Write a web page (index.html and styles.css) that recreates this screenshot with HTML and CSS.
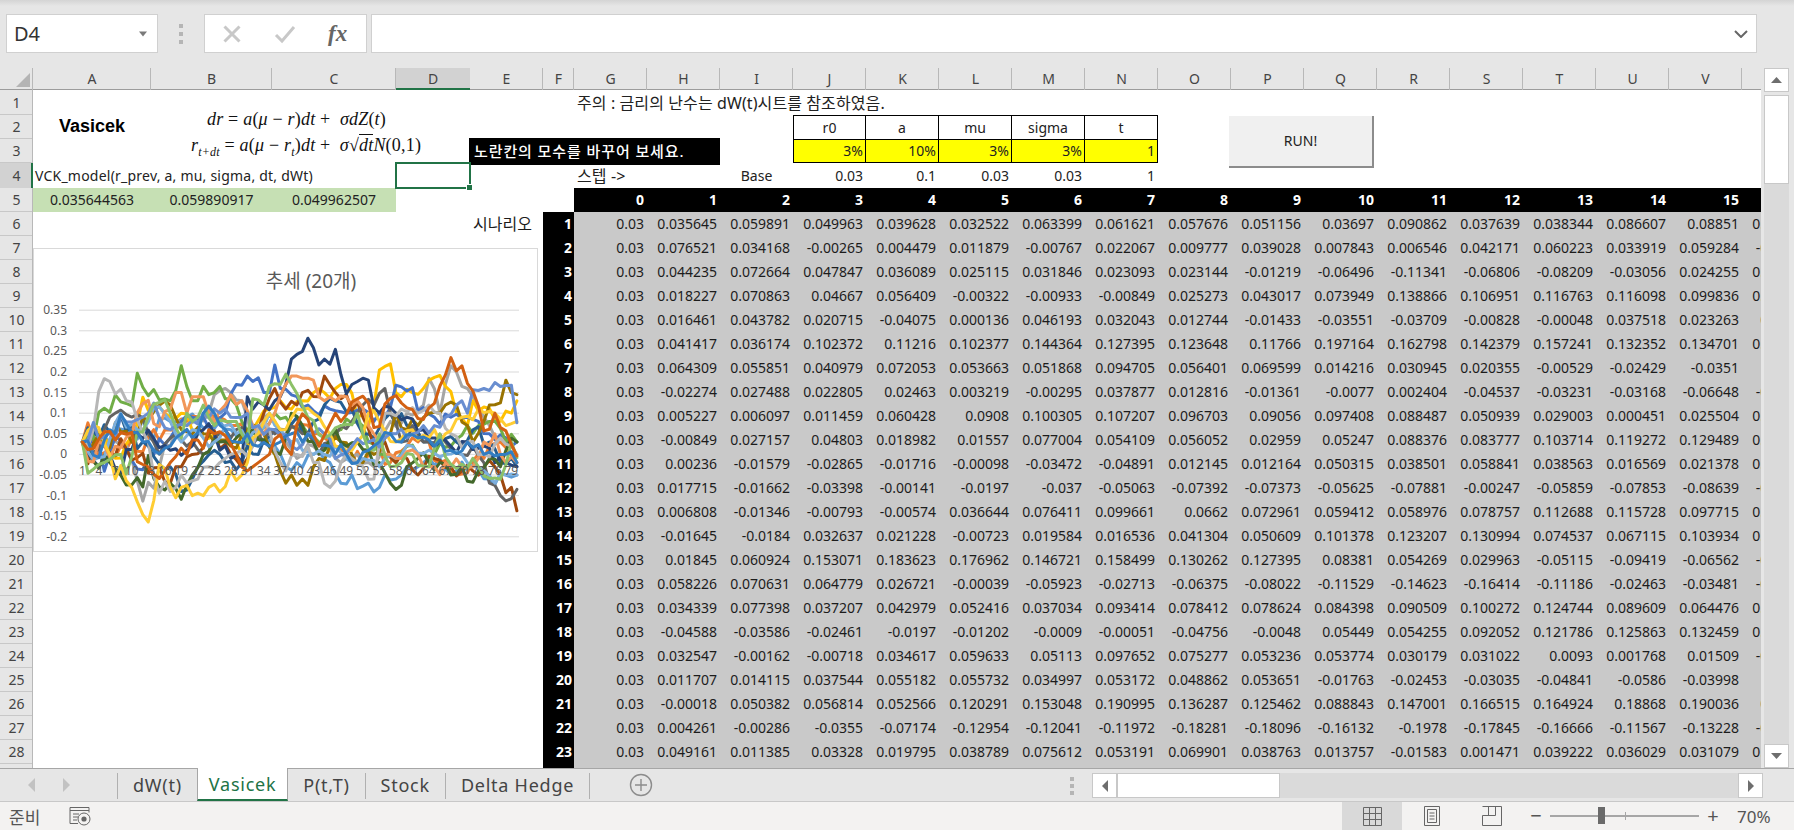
FILE: index.html

```html
<!DOCTYPE html>
<html lang="ko">

<head>
    <meta charset="UTF-8">
    <title>Vasicek</title>
    <link rel="stylesheet" href="styles.css">
</head>

<body>
    <div id="formula_bar">
        <div id="name_box">D4
            <svg class="drop" width="10" height="6" viewBox="0 0 10 6"><path d="M1 0.5h8l-4 5z" /></svg>
        </div>
        <div id="bar_dots"><i></i><i></i><i></i></div>
        <div id="fx_box">
            <svg width="20" height="20" viewBox="0 0 20 20"><path class="off" d="M2.5 2.5l15 15M17.5 2.5l-15 15" /></svg>
            <svg width="24" height="20" viewBox="0 0 24 20"><path class="off" d="M3 11l6 6L21 3" /></svg>
            <span id="fx_text">fx</span>
        </div>
        <div id="formula_input">
            <svg width="14" height="8" viewBox="0 0 14 8"><path class="chev" d="M1 1l6 6 6-6" /></svg>
        </div>
    </div>

    <div id="main">
        <div id="sheet_wrap">
            <table class="sheet">
                <tr class="heads">
                    <th class="corner"></th>
                    <th class="ca">A</th><th class="cb">B</th><th class="cc">C</th><th class="cd sel">D</th><th class="ce">E</th><th class="cf">F</th>
                    <th>G</th><th>H</th><th>I</th><th>J</th><th>K</th><th>L</th><th>M</th><th>N</th><th>O</th><th>P</th><th>Q</th><th>R</th><th>S</th><th>T</th><th>U</th><th>V</th><th>W</th>
                </tr>
                <tr class="tall"><th>1</th><td colspan="6"></td><td colspan="8" class="note">주의 : 금리의 난수는 dW(t)시트를 참조하였음.</td></tr>
                <tr><th>2</th><td colspan="9"></td><td class="pname first">r0</td><td class="pname">a</td><td class="pname">mu</td><td class="pname">sigma</td><td class="pname">t</td></tr>
                <tr><th>3</th><td colspan="9"></td><td class="pval first">3%</td><td class="pval">10%</td><td class="pval">3%</td><td class="pval">3%</td><td class="pval">1</td></tr>
                <tr class="tall">
                    <th class="sel_row">4</th><td colspan="3" class="text">VCK_model(r_prev, a, mu, sigma, dt, dWt)</td>
                    <td class="active"><div id="cell_cursor"><div id="fill_handle"></div></div></td>
                    <td colspan="2"></td><td class="note">스텝 -&gt;</td><td></td><td class="mid">Base</td>
                    <td class="right">0.03</td><td class="right">0.1</td><td class="right">0.03</td><td class="right">0.03</td><td class="right">1</td>
                </tr>
                <tr class="steps">
                    <th>5</th><td class="green">0.035644563</td><td class="green">0.059890917</td><td class="green">0.049962507</td><td></td><td></td><td></td>
                    <td class="b">0</td><td class="b">1</td><td class="b">2</td><td class="b">3</td><td class="b">4</td><td class="b">5</td><td class="b">6</td><td class="b">7</td><td class="b">8</td><td class="b">9</td><td class="b">10</td><td class="b">11</td><td class="b">12</td><td class="b">13</td><td class="b">14</td><td class="b">15</td><td class="b">16</td>
                </tr>
                <tr class="scn"><th>6</th><td colspan="4" class="blank"></td><td class="blank lbl">시나리오</td><td class="x">1</td><td>0.03</td><td>0.035645</td><td>0.059891</td><td>0.049963</td><td>0.039628</td><td>0.032522</td><td>0.063399</td><td>0.061621</td><td>0.057676</td><td>0.051156</td><td>0.03697</td><td>0.090862</td><td>0.037639</td><td>0.038344</td><td>0.086607</td><td>0.08851</td><td>0.079264</td></tr>
                <tr class="scn"><th>7</th><td colspan="5" class="blank"></td><td class="x">2</td><td>0.03</td><td>0.076521</td><td>0.034168</td><td>-0.00265</td><td>0.004479</td><td>0.011879</td><td>-0.00767</td><td>0.022067</td><td>0.009777</td><td>0.039028</td><td>0.007843</td><td>0.006546</td><td>0.042171</td><td>0.060223</td><td>0.033919</td><td>0.059284</td><td>-0.01327</td></tr>
                <tr class="scn"><th>8</th><td colspan="5" class="blank"></td><td class="x">3</td><td>0.03</td><td>0.044235</td><td>0.072664</td><td>0.047847</td><td>0.036089</td><td>0.025115</td><td>0.031846</td><td>0.023093</td><td>0.023144</td><td>-0.01219</td><td>-0.06496</td><td>-0.11341</td><td>-0.06806</td><td>-0.08209</td><td>-0.03056</td><td>0.024255</td><td>0.051408</td></tr>
                <tr class="scn"><th>9</th><td colspan="5" class="blank"></td><td class="x">4</td><td>0.03</td><td>0.018227</td><td>0.070863</td><td>0.04667</td><td>0.056409</td><td>-0.00322</td><td>-0.00933</td><td>-0.00849</td><td>0.025273</td><td>0.043017</td><td>0.073949</td><td>0.138866</td><td>0.106951</td><td>0.116763</td><td>0.116098</td><td>0.099836</td><td>0.087612</td></tr>
                <tr class="scn"><th>10</th><td colspan="5" class="blank"></td><td class="x">5</td><td>0.03</td><td>0.016461</td><td>0.043782</td><td>0.020715</td><td>-0.04075</td><td>0.000136</td><td>0.046193</td><td>0.032043</td><td>0.012744</td><td>-0.01433</td><td>-0.03551</td><td>-0.03709</td><td>-0.00828</td><td>-0.00048</td><td>0.037518</td><td>0.023263</td><td>0.02315</td></tr>
                <tr class="scn"><th>11</th><td colspan="5" class="blank"></td><td class="x">6</td><td>0.03</td><td>0.041417</td><td>0.036174</td><td>0.102372</td><td>0.11216</td><td>0.102377</td><td>0.144364</td><td>0.127395</td><td>0.123648</td><td>0.11766</td><td>0.197164</td><td>0.162798</td><td>0.142379</td><td>0.157241</td><td>0.132352</td><td>0.134701</td><td>0.151238</td></tr>
                <tr class="scn"><th>12</th><td colspan="5" class="blank"></td><td class="x">7</td><td>0.03</td><td>0.064309</td><td>0.055851</td><td>0.040979</td><td>0.072053</td><td>0.053663</td><td>0.051868</td><td>0.094705</td><td>0.056401</td><td>0.069599</td><td>0.014216</td><td>0.030945</td><td>0.020355</td><td>-0.00529</td><td>-0.02429</td><td>-0.0351</td><td>-0.0412</td></tr>
                <tr class="scn"><th>13</th><td colspan="5" class="blank"></td><td class="x">8</td><td>0.03</td><td>-0.02274</td><td>0.027488</td><td>0.022805</td><td>0.02463</td><td>0.003219</td><td>-0.00295</td><td>0.037877</td><td>0.012816</td><td>-0.01361</td><td>-0.0077</td><td>0.002404</td><td>-0.04537</td><td>-0.03231</td><td>-0.03168</td><td>-0.06648</td><td>-0.07215</td></tr>
                <tr class="scn"><th>14</th><td colspan="5" class="blank"></td><td class="x">9</td><td>0.03</td><td>0.005227</td><td>0.006097</td><td>0.011459</td><td>0.060428</td><td>0.0908</td><td>0.100305</td><td>0.107207</td><td>0.096703</td><td>0.09056</td><td>0.097408</td><td>0.088487</td><td>0.050939</td><td>0.029003</td><td>0.000451</td><td>0.025504</td><td>0.040176</td></tr>
                <tr class="scn"><th>15</th><td colspan="5" class="blank"></td><td class="x">10</td><td>0.03</td><td>-0.00849</td><td>0.027157</td><td>0.04803</td><td>0.018982</td><td>0.01557</td><td>0.077004</td><td>0.054109</td><td>0.056052</td><td>0.02959</td><td>0.05247</td><td>0.088376</td><td>0.083777</td><td>0.103714</td><td>0.119272</td><td>0.129489</td><td>0.121745</td></tr>
                <tr class="scn"><th>16</th><td colspan="5" class="blank"></td><td class="x">11</td><td>0.03</td><td>0.00236</td><td>-0.01579</td><td>-0.02865</td><td>-0.01716</td><td>-0.00098</td><td>-0.03472</td><td>-0.04891</td><td>0.012145</td><td>0.012164</td><td>0.050315</td><td>0.038501</td><td>0.058841</td><td>0.038563</td><td>0.016569</td><td>0.021378</td><td>0.013692</td></tr>
                <tr class="scn"><th>17</th><td colspan="5" class="blank"></td><td class="x">12</td><td>0.03</td><td>0.017715</td><td>-0.01662</td><td>-0.03398</td><td>-0.00141</td><td>-0.0197</td><td>-0.037</td><td>-0.05063</td><td>-0.07392</td><td>-0.07373</td><td>-0.05625</td><td>-0.07881</td><td>-0.00247</td><td>-0.05859</td><td>-0.07853</td><td>-0.08639</td><td>-0.09108</td></tr>
                <tr class="scn"><th>18</th><td colspan="5" class="blank"></td><td class="x">13</td><td>0.03</td><td>0.006808</td><td>-0.01346</td><td>-0.00793</td><td>-0.00574</td><td>0.036644</td><td>0.076411</td><td>0.099661</td><td>0.0662</td><td>0.072961</td><td>0.059412</td><td>0.058976</td><td>0.078757</td><td>0.112688</td><td>0.115728</td><td>0.097715</td><td>0.081357</td></tr>
                <tr class="scn"><th>19</th><td colspan="5" class="blank"></td><td class="x">14</td><td>0.03</td><td>-0.01645</td><td>-0.0184</td><td>0.032637</td><td>0.021228</td><td>-0.00723</td><td>0.019584</td><td>0.016536</td><td>0.041304</td><td>0.050609</td><td>0.101378</td><td>0.123207</td><td>0.130994</td><td>0.074537</td><td>0.067115</td><td>0.103934</td><td>0.112064</td></tr>
                <tr class="scn"><th>20</th><td colspan="5" class="blank"></td><td class="x">15</td><td>0.03</td><td>0.01845</td><td>0.060924</td><td>0.153071</td><td>0.183623</td><td>0.176962</td><td>0.146721</td><td>0.158499</td><td>0.130262</td><td>0.127395</td><td>0.08381</td><td>0.054269</td><td>0.029963</td><td>-0.05115</td><td>-0.09419</td><td>-0.06562</td><td>-0.08936</td></tr>
                <tr class="scn"><th>21</th><td colspan="5" class="blank"></td><td class="x">16</td><td>0.03</td><td>0.058226</td><td>0.070631</td><td>0.064779</td><td>0.026721</td><td>-0.00039</td><td>-0.05923</td><td>-0.02713</td><td>-0.06375</td><td>-0.08022</td><td>-0.11529</td><td>-0.14623</td><td>-0.16414</td><td>-0.11186</td><td>-0.02463</td><td>-0.03481</td><td>-0.03042</td></tr>
                <tr class="scn"><th>22</th><td colspan="5" class="blank"></td><td class="x">17</td><td>0.03</td><td>0.034339</td><td>0.077398</td><td>0.037207</td><td>0.042979</td><td>0.052416</td><td>0.037034</td><td>0.093414</td><td>0.078412</td><td>0.078624</td><td>0.084398</td><td>0.090509</td><td>0.100272</td><td>0.124744</td><td>0.089609</td><td>0.064476</td><td>0.059013</td></tr>
                <tr class="scn"><th>23</th><td colspan="5" class="blank"></td><td class="x">18</td><td>0.03</td><td>-0.04588</td><td>-0.03586</td><td>-0.02461</td><td>-0.0197</td><td>-0.01202</td><td>-0.0009</td><td>-0.00051</td><td>-0.04756</td><td>-0.0048</td><td>0.05449</td><td>0.054255</td><td>0.092052</td><td>0.121786</td><td>0.125863</td><td>0.132459</td><td>0.119827</td></tr>
                <tr class="scn"><th>24</th><td colspan="5" class="blank"></td><td class="x">19</td><td>0.03</td><td>0.032547</td><td>-0.00162</td><td>-0.00718</td><td>0.034617</td><td>0.059633</td><td>0.05113</td><td>0.097652</td><td>0.075277</td><td>0.053236</td><td>0.053774</td><td>0.030179</td><td>0.031022</td><td>0.0093</td><td>0.001768</td><td>0.01509</td><td>-0.01148</td></tr>
                <tr class="scn"><th>25</th><td colspan="5" class="blank"></td><td class="x">20</td><td>0.03</td><td>0.011707</td><td>0.014115</td><td>0.037544</td><td>0.055182</td><td>0.055732</td><td>0.034997</td><td>0.053172</td><td>0.048862</td><td>0.053651</td><td>-0.01763</td><td>-0.02453</td><td>-0.03035</td><td>-0.04841</td><td>-0.0586</td><td>-0.03998</td><td>-0.0387</td></tr>
                <tr class="scn"><th>26</th><td colspan="5" class="blank"></td><td class="x">21</td><td>0.03</td><td>-0.00018</td><td>0.050382</td><td>0.056814</td><td>0.052566</td><td>0.120291</td><td>0.153048</td><td>0.190995</td><td>0.136287</td><td>0.125462</td><td>0.088843</td><td>0.147001</td><td>0.166515</td><td>0.164924</td><td>0.18868</td><td>0.190036</td><td>0.17215</td></tr>
                <tr class="scn"><th>27</th><td colspan="5" class="blank"></td><td class="x">22</td><td>0.03</td><td>0.004261</td><td>-0.00286</td><td>-0.0355</td><td>-0.07174</td><td>-0.12954</td><td>-0.12041</td><td>-0.11972</td><td>-0.18281</td><td>-0.18096</td><td>-0.16132</td><td>-0.1978</td><td>-0.17845</td><td>-0.16666</td><td>-0.11567</td><td>-0.13228</td><td>-0.14473</td></tr>
                <tr class="scn"><th>28</th><td colspan="5" class="blank"></td><td class="x">23</td><td>0.03</td><td>0.049161</td><td>0.011385</td><td>0.03328</td><td>0.019795</td><td>0.038789</td><td>0.075612</td><td>0.053191</td><td>0.069901</td><td>0.038763</td><td>0.013757</td><td>-0.01583</td><td>0.001471</td><td>0.039222</td><td>0.036029</td><td>0.031079</td><td>0.027906</td></tr>
                <tr class="scn"><th></th><td colspan="5" class="blank"></td><td class="x"></td><td colspan="17"></td></tr>
            </table>

            <div class="label_title">Vasicek</div>
            <div class="eq eq1"><i>dr</i> = <i>a</i>(<i>μ</i> − <i>r</i>)<i>dt</i> +&nbsp; <i>σdZ</i>(<i>t</i>)</div>
            <div class="eq eq2"><i>r</i><sub><i>t+dt</i></sub> = <i>a</i>(<i>μ</i> − <i>r</i><sub><i>t</i></sub>)<i>dt</i> +&nbsp; <i>σ</i>√<span class="over"><i>dt</i></span><i>N</i>(0,1)</div>
            <div id="notice">노란칸의 모수를 바꾸어 보세요.</div>
            <div id="run_btn">RUN!</div>
            <div id="chart"><svg id="chart_svg" width="503" height="302" viewBox="0 0 503 302"></svg></div>
        </div>

        <div id="vbar">
            <div class="vbtn"><svg width="11" height="6" viewBox="0 0 11 6"><path class="tri" d="M5.5 0l5.5 6H0z" /></svg></div>
            <div id="vthumb"></div>
            <div id="vtrack"></div>
            <div class="vbtn"><svg width="11" height="6" viewBox="0 0 11 6"><path class="tri" d="M0 0h11L5.5 6z" /></svg></div>
        </div>
    </div>

    <div id="tab_bar">
        <div id="tab_nav">
            <svg width="7" height="14" viewBox="0 0 7 14"><path class="nav" d="M7 0v14L0 7z" /></svg>
            <svg width="7" height="14" viewBox="0 0 7 14"><path class="nav" d="M0 0v14l7-7z" /></svg>
        </div>
        <div class="tab">dW(t)</div>
        <div class="tab on">Vasicek</div>
        <div class="tab">P(t,T)</div>
        <div class="tab">Stock</div>
        <div class="tab last">Delta Hedge</div>
        <svg id="add_sheet" width="24" height="24" viewBox="0 0 24 24"><circle cx="12" cy="12" r="10.5" /><path d="M12 6v12M6 12h12" /></svg>
        <div id="tab_dots"><i></i><i></i><i></i></div>
        <div id="hscroll">
            <div class="hbtn"><svg width="6" height="12" viewBox="0 0 6 12"><path class="tri" d="M6 0v12L0 6z" /></svg></div>
            <div id="hthumb"></div>
            <div id="htrack"></div>
            <div class="hbtn"><svg width="6" height="12" viewBox="0 0 6 12"><path class="tri" d="M0 0v12l6-6z" /></svg></div>
        </div>
    </div>

    <div id="status_bar">
        <span id="ready">준비</span>
        <svg id="macro_icon" width="22" height="19" viewBox="0 0 22 19">
            <path class="ico" d="M1 .5h19v5M1 .5v16h8M1 3.5h19M4 7h6M4 10h5M4 13h4" />
            <circle class="ico" cx="15" cy="12" r="6" /><circle class="dot" cx="15" cy="12" r="2.6" />
        </svg>
        <div id="views">
            <div class="view on">
                <svg width="19" height="19" viewBox="0 0 19 19"><path class="ico" d="M.5.5h18v18H.5zM6.5.5v18M12.5.5v18M.5 6.5h18M.5 12.5h18" /></svg>
            </div>
            <div class="view">
                <svg width="22" height="20" viewBox="0 0 22 20"><path class="ico" d="M3.5.5h15v19h-15zM6.5 3.5h9v13h-9zM8.5 7h5M8.5 10h5M8.5 13h5" /></svg>
            </div>
            <div class="view">
                <svg width="20" height="20" viewBox="0 0 20 20"><path class="ico" d="M.5.5h19v19H.5V9.5h13V.5M6.5.5v9" /></svg>
            </div>
        </div>
        <span class="zoom_sign">−</span>
        <div id="zoom_slider"><i id="zoom_tick"></i><i id="zoom_thumb"></i></div>
        <span class="zoom_sign">+</span>
        <span id="zoom_text">70%</span>
    </div>

    <script src="chart.js"></script>
</body>

</html>
```

FILE: styles.css

```css
* {
    box-sizing: border-box;
}

body {
    margin: 0;
    width: 1794px;
    height: 830px;
    overflow: hidden;
    background: #e6e6e6;
    font-family: "Noto Sans", "Noto Sans CJK KR", sans-serif;
    font-size: 14px;
    color: #222;
}

/* formula bar */
#formula_bar {
    height: 68px;
    padding: 14px 0 0 6px;
    display: flex;
    align-items: flex-start;
    background: linear-gradient(#d4d4d4 0, #e6e6e6 6px);
}

#name_box {
    width: 152px;
    height: 39px;
    background: #fff;
    border: 1px solid #d0d0d0;
    padding-left: 7px;
    display: flex;
    align-items: center;
    justify-content: space-between;
    font-size: 20px;
    color: #333;
}

#name_box .drop {
    margin-right: 9px;
    fill: #7a7a7a;
}

#bar_dots {
    width: 46px;
    height: 39px;
    display: flex;
    flex-direction: column;
    align-items: center;
    justify-content: center;
    gap: 4px;
}

#bar_dots i,
#tab_dots i {
    width: 4px;
    height: 4px;
    background: #b5b5b5;
}

#fx_box {
    width: 163px;
    height: 39px;
    background: #fff;
    border: 1px solid #d0d0d0;
    padding-left: 17px;
    display: flex;
    align-items: center;
    gap: 31px;
}

#fx_box .off {
    fill: none;
    stroke: #c8c8c8;
    stroke-width: 3;
}

#fx_text {
    font-family: "Liberation Serif", serif;
    font-style: italic;
    font-weight: bold;
    font-size: 23px;
    color: #666;
}

#formula_input {
    width: 1386px;
    height: 39px;
    margin-left: 4px;
    background: #fff;
    border: 1px solid #d0d0d0;
    padding-right: 8px;
    display: flex;
    align-items: center;
    justify-content: flex-end;
}

#formula_input .chev {
    fill: none;
    stroke: #666;
    stroke-width: 2;
}

/* sheet */
#main {
    height: 700px;
    display: flex;
}

#sheet_wrap {
    width: 1761px;
    height: 700px;
    position: relative;
    overflow: hidden;
    background: #fff;
}

.sheet {
    width: 1815px;
    table-layout: fixed;
    border-collapse: separate;
    border-spacing: 0;
}

.sheet tr {
    height: 24px;
}

.sheet tr.tall {
    height: 25px;
}

.sheet tr.heads {
    height: 22px;
}

.sheet th,
.sheet td {
    padding: 0;
    line-height: 20px;
    white-space: nowrap;
    font-weight: normal;
}

.sheet th {
    width: 73px;
    background: #e6e6e6;
    color: #444;
    text-align: center;
    box-shadow: inset -1px 0 0 #b8b8b8, inset 0 -1px 0 #c8c8c8;
}

.sheet .heads th {
    box-shadow: inset -1px 0 0 #b8b8b8, inset 0 -1px 0 #9c9c9c;
}

.sheet th.corner {
    width: 33px;
    position: relative;
}

.sheet th.corner::after {
    content: "";
    position: absolute;
    right: 3px;
    bottom: 3px;
    border-style: solid;
    border-width: 0 0 14px 14px;
    border-color: transparent transparent #b4b4b4 transparent;
}

.sheet th.ca {
    width: 118px;
}

.sheet th.cb {
    width: 121px;
}

.sheet th.cc {
    width: 124px;
}

.sheet th.cd {
    width: 74px;
}

.sheet th.cf {
    width: 31px;
}

.sheet .heads th.sel {
    background: #d2d2d2;
    box-shadow: inset 0 -2px 0 #217346;
}

.sheet th.sel_row {
    background: #d2d2d2;
    box-shadow: inset -2px 0 0 #217346;
}

.note {
    padding-left: 3px !important;
    font-size: 16px;
    letter-spacing: .1px;
}

.text {
    padding-left: 2px !important;
    letter-spacing: .22px;
}

.mid {
    text-align: center;
}

.right {
    text-align: right;
    padding-right: 3px !important;
}

.pname,
.pval {
    border-top: 1px solid #000;
    border-right: 1px solid #000;
}

.pname {
    text-align: center;
}

.pval {
    background: #ff0;
    text-align: right;
    padding-right: 2px !important;
    border-bottom: 1px solid #000;
}

.first {
    border-left: 1px solid #000;
}

.green {
    background: #c6e0b4;
    text-align: center;
}

.active {
    position: relative;
}

#cell_cursor {
    position: absolute;
    left: -1px;
    right: -1px;
    top: -1px;
    bottom: -1px;
    border: 2px solid #217346;
    z-index: 3;
}

#fill_handle {
    position: absolute;
    right: -4px;
    bottom: -4px;
    width: 7px;
    height: 7px;
    background: #217346;
    border: 1px solid #fff;
}

.steps .b {
    background: #000;
    color: #fff;
    font-weight: bold;
    text-align: right;
    padding-right: 3px;
}

.scn td {
    background: #c9c9c9;
    text-align: right;
    padding-right: 3px;
    color: #1c1c1c;
}

.scn td.blank {
    background: none;
}

.scn td.lbl {
    padding-right: 11px;
    font-size: 16px;
}

.scn td.x {
    background: #000;
    color: #fff;
    font-weight: bold;
    padding-right: 2px;
}

/* things on top of the cells */
.label_title {
    position: absolute;
    left: 59px;
    top: 48px;
    font-family: "Liberation Sans", sans-serif;
    font-weight: bold;
    font-size: 18px;
    color: #000;
}

.eq {
    position: absolute;
    font-family: "Liberation Serif", serif;
    font-size: 18px;
    letter-spacing: .2px;
    line-height: 24px;
    white-space: nowrap;
    color: #111;
}

.eq1 {
    left: 207px;
    top: 39px;
}

.eq2 {
    left: 191px;
    top: 65px;
}

.eq sub {
    font-size: 12px;
    line-height: 0;
}

.over {
    border-top: 1px solid #111;
}

#notice {
    position: absolute;
    left: 469px;
    top: 70px;
    width: 251px;
    height: 27px;
    padding-left: 5px;
    background: #000;
    color: #fff;
    font-size: 15px;
    font-weight: 500;
    letter-spacing: .9px;
    line-height: 27px;
    white-space: nowrap;
}

#run_btn {
    position: absolute;
    left: 1229px;
    top: 48px;
    width: 145px;
    height: 52px;
    background: #f0f0f0;
    border-right: 2px solid #8c8c8c;
    border-bottom: 2px solid #8c8c8c;
    text-align: center;
    line-height: 50px;
    color: #222;
}

#chart {
    position: absolute;
    left: 33px;
    top: 180px;
    width: 505px;
    height: 304px;
    background: #fff;
    border: 1px solid #d9d9d9;
}

#chart_svg {
    display: block;
}

.grid_line {
    stroke: #d9d9d9;
    stroke-width: 1;
}

.axis_text {
    font-size: 12px;
    fill: #595959;
}

.chart_title {
    font-size: 19px;
    fill: #595959;
}

.series {
    fill: none;
    stroke-width: 3;
    stroke-linejoin: round;
    stroke-linecap: round;
}

/* vertical scroll bar */
#vbar {
    width: 25px;
    height: 700px;
    margin-left: 3px;
    display: flex;
    flex-direction: column;
}

.vbtn {
    height: 24px;
    background: #fff;
    border: 1px solid #c8c8c8;
    display: flex;
    align-items: center;
    justify-content: center;
}

.tri {
    fill: #6e6e6e;
}

#vthumb {
    height: 89px;
    margin-top: 3px;
    background: #fff;
    border: 1px solid #c8c8c8;
}

#vtrack {
    flex: 1;
    background: #dadada;
}

/* sheet tabs */
#tab_bar {
    height: 34px;
    border-top: 1px solid #a6a6a6;
    border-bottom: 1px solid #c8c8c8;
    display: flex;
    align-items: flex-start;
    font-size: 18px;
    letter-spacing: .75px;
    color: #444;
}

#tab_nav {
    width: 117px;
    height: 32px;
    padding-left: 28px;
    display: flex;
    align-items: center;
    gap: 28px;
}

#tab_nav .nav {
    fill: #c2c2c2;
}

.tab {
    height: 26px;
    margin-top: 4px;
    padding: 0 15px;
    border-left: 1px solid #b0b0b0;
    line-height: 24px;
    white-space: nowrap;
}

.tab.on {
    height: 33px;
    margin-top: -1px;
    padding: 4px 11px 0;
    background: #fff;
    color: #217346;
    border-left: 1px solid #a6a6a6;
    border-right: 1px solid #a6a6a6;
    border-bottom: 2px solid #217346;
}

.tab.on + .tab {
    border-left: 0;
}

.tab.last {
    border-right: 1px solid #b0b0b0;
}

#add_sheet {
    margin: 4px 0 0 39px;
    fill: none;
    stroke: #8c8c8c;
    stroke-width: 1.4;
}

#tab_dots {
    margin: 5px 0 0 auto;
    width: 24px;
    height: 24px;
    display: flex;
    flex-direction: column;
    align-items: center;
    justify-content: center;
    gap: 3px;
}

#hscroll {
    width: 671px;
    height: 25px;
    margin: 4px 31px 0 8px;
    display: flex;
}

.hbtn {
    width: 25px;
    background: #fff;
    border: 1px solid #c8c8c8;
    display: flex;
    align-items: center;
    justify-content: center;
}

#hthumb {
    width: 163px;
    background: #fff;
    border: 1px solid #c8c8c8;
}

#htrack {
    flex: 1;
    background: #dadada;
}

/* status bar */
#status_bar {
    height: 28px;
    background: #f3f2f1;
    display: flex;
    align-items: center;
    font-size: 17px;
    color: #555;
}

#ready {
    margin-left: 9px;
    font-size: 17px;
}

#macro_icon {
    margin-left: 29px;
}

.ico {
    fill: none;
    stroke: #666;
    stroke-width: 1;
}

.dot {
    fill: #666;
}

#views {
    margin-left: auto;
    display: flex;
}

.view {
    width: 60px;
    height: 28px;
    display: flex;
    align-items: center;
    justify-content: center;
}

.view.on {
    background: #d9d9d9;
}

.zoom_sign {
    width: 14px;
    margin-left: 7px;
    text-align: center;
    font-size: 20px;
    line-height: 26px;
}

#zoom_slider {
    width: 149px;
    height: 2px;
    margin-left: 7px;
    background: #a6a6a6;
    position: relative;
}

#zoom_tick {
    position: absolute;
    left: 75px;
    top: -3px;
    width: 1px;
    height: 8px;
    background: #a6a6a6;
}

#zoom_thumb {
    position: absolute;
    left: 48px;
    top: -8px;
    width: 7px;
    height: 17px;
    background: #6a6a6a;
}

#zoom_text {
    width: 34px;
    margin: 0 23px 0 17px;
    white-space: nowrap;
}
```

FILE: chart.js

```js
window.onload = function () {
    var oSvg = document.getElementById('chart_svg');
    var aRow = document.querySelectorAll('.sheet tr.scn');
    var NS = 'http://www.w3.org/2000/svg';
    var iSeed = 48271;

    var aColor = ['#5B9BD5', '#ED7D31', '#A5A5A5', '#FFC000', '#4472C4', '#70AD47', '#255E91', '#9E480E', '#636363', '#997300',
        '#264478', '#43682B', '#7CAFDD', '#F1975A', '#B7B7B7', '#FFCD33', '#698ED0', '#8CC168', '#327DC2', '#D26012'];

    // steps after the ones in the table, read off as step:value
    var aLater = [
        '17:.08 20:.09 24:.07 28:.06 32:.03 36:.02 38:-.03 40:-.02 43:0 46:-.02 48:-.07 50:-.05 51:-.083 53:-.07 55:-.08 56:-.05 58:-.06 60:-.03 63:-.02 66:-.01 69:-.04 72:-.02 75:-.06 78:-.05 80:-.05',
        '17:.06 20:.08 24:.1 28:.07 32:.04 36:.06 40:.07 44:.05 46:.03 48:.01 50:-.02 54:.02 57:-.02 60:.02 64:.03 66:-.02 69:-.05 72:-.015 75:.02 77:.03 80:-.02',
        '17:.02 18:.06 20:.07 22:.09 24:.1 25:.145 26:.155 28:.15 30:.13 31:.09 32:.03 34:.09 36:.08 38:.03 40:-.01 43:.02 46:.01 48:-.02 51:0 54:-.03 57:.08 60:.1 63:.12 64:.185 66:.1 67:.17 68:.215 69:.2 70:.165 71:.16 72:.14 74:.09 77:.04 80:.03',
        '17:.09 19:.1 22:.06 25:.05 28:.03 30:0 32:.06 35:.11 37:.13 39:.11 41:.13 43:.15 45:.15 47:.16 48:.17 49:.17 51:.09 53:.07 54:.12 55:.205 57:.22 58:.15 59:.14 61:.15 63:.16 65:.187 67:.165 69:.1 71:.07 72:.13 74:.115 76:.085 78:.105 79:.1 80:.13',
        '17:.04 19:.08 21:.09 23:.09 25:.07 27:.1 29:.17 30:.168 31:.19 33:.186 34:.15 35:.15 36:.217 37:.16 38:.158 40:.14 42:.12 46:.11 49:.1 52:.11 54:.08 56:.09 58:.168 60:.154 61:.162 62:.105 65:.09 68:.09 71:.09 73:.08 75:.05 78:.04 80:.03',
        '17:.13 18:.155 19:.215 20:.165 21:.13 22:.13 23:.165 24:.145 25:.15 26:.165 27:.135 28:.135 29:.12 30:.08 32:.05 34:.065 36:.1 38:.09 40:.06 42:.05 44:.03 46:.02 48:.06 51:.08 53:.03 56:0 58:-.02 60:.02 62:0 65:0 68:.02 71:.07 73:.07 75:.08 78:.03 80:.03',
        '17:-.03 19:-.09 21:-.06 22:-.03 25:.01 27:-.02 30:-.02 31:.02 33:0 36:.06 38:.04 40:.09 42:.05 45:.12 47:.13 50:.11 52:.05 54:.04 57:.1 60:.07 63:.03 66:.03 69:.03 72:.06 75:.03 77:-.02 80:-.03',
        '17:-.07 19:-.03 21:0 24:.05 28:0 30:-.03 32:.03 34:.1 36:.16 38:.11 40:.12 41:.15 44:.14 45:.19 47:.15 49:.145 52:.09 54:.02 56:.03 58:-.02 60:-.01 62:-.05 65:-.01 68:-.03 70:-.04 72:-.04 74:-.03 76:-.03 77:-.05 78:-.093 79:-.08 80:-.137',
        '17:.04 20:.02 23:0 26:.05 29:.06 32:.02 35:.06 38:.06 41:.05 44:0 46:.03 48:.07 50:.08 52:.12 54:.12 56:.16 57:.1 59:.03 61:.07 64:.03 67:.03 70:0 72:.02 74:-.02 75:-.07 76:-.075 77:-.1 78:-.113 80:-.085',
        '17:.12 19:.06 21:.05 23:.05 25:.03 28:.02 31:.06 34:.05 36:0 37:-.04 38:-.07 39:-.05 40:-.075 41:-.06 42:-.075 43:-.03 44:-.01 46:.02 48:.03 50:0 52:-.02 54:0 56:.04 58:.1 60:.06 62:.07 64:.1 66:.1 67:.12 69:.12 71:.07 72:.03 74:.08 75:.12 77:.125 78:.18 79:.15 80:.145',
        '17:.01 20:.01 23:.06 25:.05 28:-.01 30:-.02 31:.14 32:.11 34:.12 36:.13 37:.14 38:.17 39:.231 40:.243 41:.25 42:.282 43:.259 44:.217 45:.231 46:.219 47:.255 48:.194 49:.147 51:.177 52:.185 53:.18 54:.113 55:.101 56:.117 58:.1 60:.09 63:.06 66:.04 68:.02 71:.03 74:.02 76:-.02 78:-.02 80:-.03',
        '17:-.07 19:-.109 20:-.075 21:-.05 23:0 26:.03 29:.04 32:.06 35:.02 37:0 38:.04 39:.1 41:.07 43:.03 45:.01 47:.06 49:.02 51:.03 53:.01 55:-.02 57:-.07 59:-.075 60:-.03 62:-.01 64:-.02 66:-.02 68:-.05 70:-.03 71:-.065 73:-.04 75:-.01 77:-.03 78:.01 80:.03',
        '17:.08 19:.03 21:.06 23:.04 25:.03 27:.07 29:.05 31:.03 33:.06 35:.1 37:.06 39:.03 41:.01 43:0 45:0 47:.02 49:-.01 52:-.01 55:-.03 58:-.01 61:.02 64:.01 67:0 70:0 72:-.03 74:-.04 76:-.07 78:-.05 80:-.05',
        '17:.11 18:.15 19:.15 20:.1 21:.14 22:.14 23:.14 24:.1 25:.08 27:.12 28:.145 30:.13 32:.07 34:.05 36:.1 38:.17 39:.19 40:.19 41:.185 42:.185 43:.18 44:.14 45:.13 47:.13 49:.14 51:.13 53:.07 55:.03 57:0 59:-.01 62:0 65:-.03 68:-.03 70:-.03 72:-.03 74:.03 76:.05 78:-.02 80:-.02',
        '17:-.09 18:-.08 19:-.05 20:-.07 22:-.06 24:-.03 26:-.02 28:0 30:.01 32:.02 34:.08 35:.06 37:-.02 38:-.04 40:0 42:.02 44:-.02 45:-.07 46:-.08 48:-.02 50:-.01 52:-.03 54:-.06 56:.1 57:.1 59:.11 62:.1 64:.12 66:.1 68:.05 71:.03 74:0 77:.04 80:0',
        '17:-.08 18:-.105 19:-.08 20:-.075 21:-.1 23:-.1 24:-.08 27:-.078 28:-.04 29:-.063 30:-.05 31:-.02 32:.04 33:.05 35:.1 37:.06 40:.11 43:.1 46:.05 47:.02 49:.01 51:.03 53:.1 55:.08 58:.03 61:.06 64:.04 67:.05 70:.09 73:.11 76:.1 78:.07 80:.08',
        '17:.06 20:.07 23:.1 26:.1 28:.09 30:.09 33:.07 36:.06 39:.02 42:.05 45:.05 47:-.01 50:.02 53:.03 56:.04 58:.05 60:.04 63:.07 65:.07 67:.09 69:.12 70:.13 71:.1 72:.157 73:.155 74:.16 75:.155 77:.165 78:.167 79:.168 80:.077',
        '17:.1 19:.04 20:.1 21:.08 23:.12 25:.07 27:.08 28:.08 30:.05 31:.03 32:.135 34:.12 35:.165 37:.17 38:.195 39:.17 42:.09 45:.04 48:.07 51:.1 52:.05 54:.01 55:.05 57:-.03 59:-.02 61:0 64:-.03 66:.05 68:-.024 70:-.024 73:-.03 76:-.057 78:-.025 79:.03 80:-.008',
        '17:.02 19:.05 21:.04 23:.1 25:.1 27:.06 29:.03 31:.05 33:.02 35:.02 37:.03 39:.05 41:.03 43:.04 46:.02 49:0 51:-.02 53:.01 55:.03 57:.05 59:.03 62:.04 65:.02 68:.01 71:.03 74:0 77:0 80:-.02',
        '17:-.02 18:-.005 19:.015 20:0 21:.035 22:.035 23:.015 24:.06 25:.05 26:.055 27:.045 28:.025 29:0 30:-.03 31:-.04 32:-.03 33:-.02 34:-.01 35:0 37:.048 39:0 40:.073 42:.085 43:.048 44:.02 46:.073 47:.1 48:.08 51:.135 53:.125 54:.065 55:.068 56:.122 58:.143 61:.109 63:.085 64:.113 66:.166 68:.235 69:.203 70:.215 72:.154 74:.057 75:.061 76:.1 78:.057 79:.024 80:-.004'
    ];

    function getX(iStep) {
        return 48.35 + 5.5 * (iStep - 1);
    }

    function getY(fVal) {
        return 205.4 - 412 * fVal;
    }

    function rnd() {
        iSeed = iSeed * 16807 % 2147483647;
        return iSeed / 2147483647;
    }

    function add(sTag, oAttr, sText) {
        var oEl = document.createElementNS(NS, sTag);
        for (var k in oAttr) {
            oEl.setAttribute(k, oAttr[k]);
        }
        if (sText) {
            oEl.textContent = sText;
        }
        oSvg.appendChild(oEl);
    }

    function getSeries(n) {
        var aVal = [];
        var aCell = aRow[n].querySelectorAll('td:not(.blank):not(.x)');
        for (var i = 0; i < 16; i++) {
            aVal.push(parseFloat(aCell[i].textContent));
        }
        var aMark = aLater[n].split(' ').map(function (s) {
            var a = s.split(':');
            return { s: parseInt(a[0]), v: parseFloat(a[1]) };
        });
        var iLast = 16;
        var fLast = aVal[15];
        for (var m = 0; m < aMark.length; m++) {
            var iGap = aMark[m].s - iLast;
            for (var j = 1; j <= iGap; j++) {
                var fVal = fLast + (aMark[m].v - fLast) * j / iGap;
                if (j < iGap && iGap > 1) {
                    fVal += (rnd() - 0.5) * 0.04;
                }
                aVal.push(fVal);
            }
            iLast = aMark[m].s;
            fLast = aMark[m].v;
        }
        return aVal;
    }

    add('text', { x: 277, y: 39, 'text-anchor': 'middle', 'class': 'chart_title' }, '추세 (20개)');

    for (var i = 0; i < 12; i++) {
        var fTick = 0.35 - i * 0.05;
        var sTick = String(Math.round(fTick * 100) / 100);
        add('line', { x1: 45, x2: 485, y1: getY(fTick), y2: getY(fTick), 'class': 'grid_line' });
        add('text', { x: 33, y: getY(fTick) + 4, 'text-anchor': 'end', 'class': 'axis_text' }, sTick);
    }

    for (var n = 0; n < 20; n++) {
        var aSeries = getSeries(n);
        var aPts = [];
        for (var p = 0; p < aSeries.length; p++) {
            aPts.push(getX(p + 1).toFixed(1) + ',' + getY(aSeries[p]).toFixed(1));
        }
        add('polyline', { points: aPts.join(' '), stroke: aColor[n], 'class': 'series' });
    }

    // the category labels sit on top of the lines
    for (var s = 1; s <= 80; s += 3) {
        add('text', { x: getX(s), y: 226, 'text-anchor': 'middle', 'class': 'axis_text' }, String(s));
    }
};
```
